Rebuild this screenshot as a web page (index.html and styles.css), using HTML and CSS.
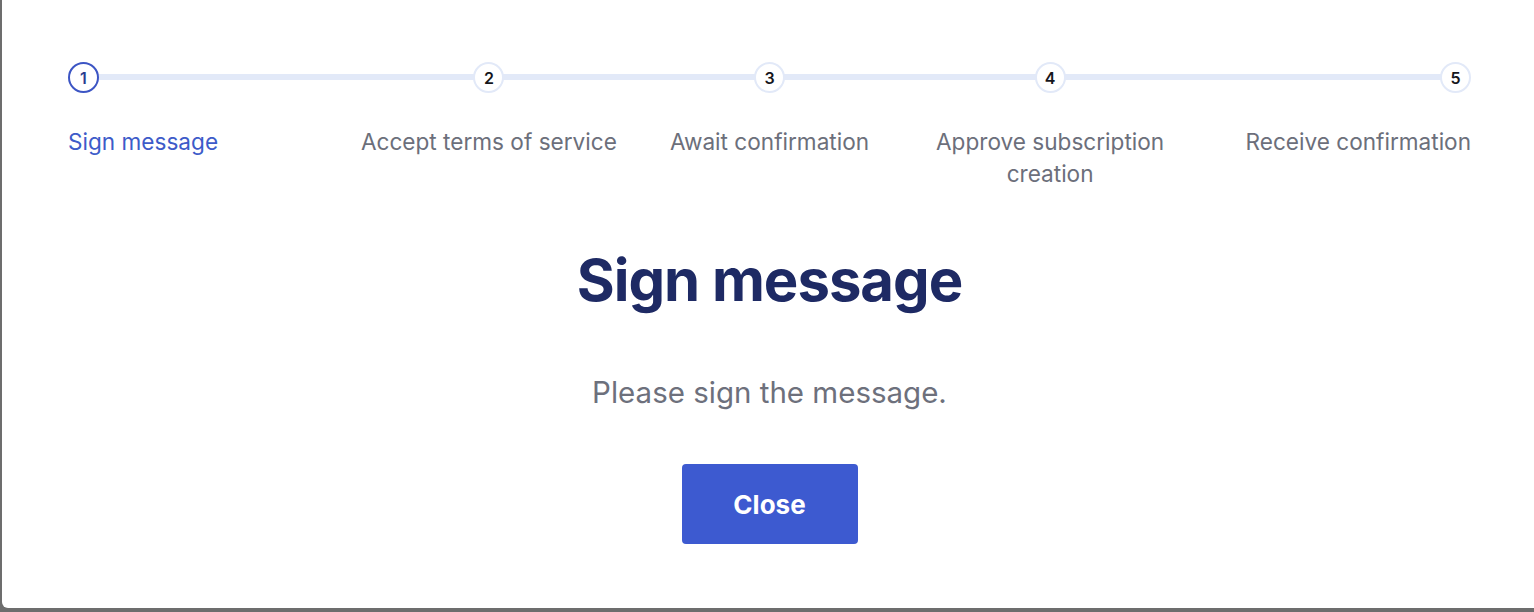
FILE: index.html
```html
<!DOCTYPE html>
<html lang="en">
<head>
<meta charset="utf-8">
<title>Sign message</title>
<link rel="stylesheet" href="styles.css">
</head>
<body>
<div class="panel">
  <ol class="steps">
    <li class="step step-first active">
      <span class="dot">1</span>
      <span class="label">Sign message</span>
    </li>
    <li class="step">
      <span class="dot">2</span>
      <span class="label">Accept terms of service</span>
    </li>
    <li class="step">
      <span class="dot">3</span>
      <span class="label">Await confirmation</span>
    </li>
    <li class="step">
      <span class="dot">4</span>
      <span class="label">Approve subscription creation</span>
    </li>
    <li class="step step-last">
      <span class="dot">5</span>
      <span class="label">Receive confirmation</span>
    </li>
  </ol>
  <div class="content">
    <h1 class="title">Sign message</h1>
    <p class="desc">Please sign the message.</p>
    <button class="btn" type="button">Close</button>
  </div>
</div>
</body>
</html>
```
FILE: styles.css
```css
html, body {
  margin: 0;
  padding: 0;
  height: 100%;
}
body {
  background: #6d6d6d;
  font-family: "Inter", "Liberation Sans", sans-serif;
  overflow: hidden;
}
.panel {
  margin-left: 2px;
  height: 608px;
  background: #ffffff;
  border-bottom-left-radius: 6px;
  box-sizing: border-box;
  padding: 62px 63px 0 66px;
}
.steps {
  list-style: none;
  margin: 0;
  padding: 0;
  display: grid;
  grid-template-columns: repeat(5, 1fr);
  position: relative;
}
.steps::before {
  content: "";
  position: absolute;
  left: 16px;
  right: 16px;
  top: 12px;
  height: 6px;
  background: #e2e9f8;
}
.step {
  display: flex;
  flex-direction: column;
  align-items: center;
  text-align: center;
  position: relative;
}
.step-first {
  align-items: flex-start;
  text-align: left;
}
.step-last {
  align-items: flex-end;
  text-align: right;
}
.dot {
  width: 31px;
  height: 31px;
  box-sizing: border-box;
  border: 2px solid #e2e9f8;
  border-radius: 50%;
  background: #ffffff;
  display: flex;
  align-items: center;
  justify-content: center;
  font-size: 16px;
  font-weight: 600;
  color: #15161c;
}
.active .dot {
  border-color: #3c55c4;
  color: #2a3d8f;
}
.label {
  margin-top: 33px;
  font-size: 22.6px;
  line-height: 32px;
  color: #6c6f7b;
  max-width: 260px;
}
.active .label {
  color: #3d5bc9;
}
.content {
  display: flex;
  flex-direction: column;
  align-items: center;
  padding-top: 50px;
}
.title {
  margin: 0;
  font-size: 58px;
  line-height: 80px;
  font-weight: 700;
  color: #1e2a64;
  letter-spacing: -1px;
}
.desc {
  margin: 52px 0 0;
  font-size: 29.5px;
  line-height: 40px;
  color: #6d707c;
}
.btn {
  margin-top: 52px;
  width: 176px;
  height: 80px;
  border: 0;
  border-radius: 4px;
  background: #3d5ad0;
  color: #ffffff;
  font-family: inherit;
  font-size: 26px;
  font-weight: 700;
}
```
